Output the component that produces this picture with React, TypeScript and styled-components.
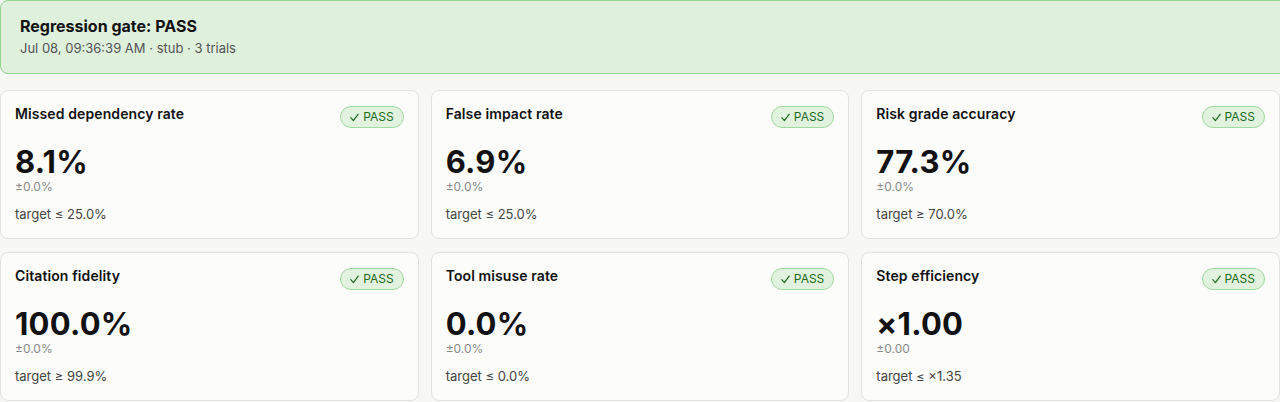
import React from "react";
import styled, { createGlobalStyle } from "styled-components";

const GlobalStyle = createGlobalStyle`
  html, body {
    margin: 0;
    padding: 0;
    background: #f7f7f5;
    overflow: hidden;
  }
  body {
    font-family: Inter, "Noto Sans", "Liberation Sans", sans-serif;
    color: #111;
    -webkit-font-smoothing: antialiased;
  }
`;

const Page = styled.div`
  width: 1280px;
  overflow: hidden;
  display: flex;
  flex-direction: column;
  gap: 16px;
`;

const Banner = styled.header`
  margin-right: -8px;
  background: #dff0dd;
  border: 1px solid #92d791;
  border-radius: 8px;
  padding: 15px 19px 16px;
  display: flex;
  flex-direction: column;
  gap: 3px;
`;

const BannerTitle = styled.h1`
  margin: 0;
  font-size: 16px;
  line-height: 20px;
  font-weight: 700;
  color: #111;
`;

const BannerMeta = styled.div`
  font-size: 13px;
  line-height: 18px;
  color: #555;
`;

const Grid = styled.div`
  display: grid;
  grid-template-columns: repeat(3, 1fr);
  gap: 13px 12px;
`;

const Card = styled.section`
  background: #fcfcfb;
  border: 1px solid #e2e2df;
  border-radius: 8px;
  padding: 15px 14px 15px;
  display: flex;
  flex-direction: column;
`;

const CardHead = styled.div`
  display: flex;
  justify-content: space-between;
  align-items: flex-start;
`;

const CardTitle = styled.h2`
  margin: 0;
  font-size: 14px;
  line-height: 16px;
  font-weight: 600;
  color: #111;
  letter-spacing: 0.1px;
`;

const Badge = styled.span<{ $ok: boolean }>`
  box-sizing: border-box;
  height: 22px;
  padding: 0 9px 0 9px;
  display: inline-flex;
  align-items: center;
  gap: 4px;
  border-radius: 11px;
  font-size: 12px;
  line-height: 1;
  background: ${(p) => (p.$ok ? "#e1f3df" : "#fbe3e1")};
  border: 1px solid ${(p) => (p.$ok ? "#9fdb9e" : "#e8a29c")};
  color: ${(p) => (p.$ok ? "#1f6a22" : "#9b2a22")};
`;

const CheckIcon = styled.svg`
  width: 9px;
  height: 9px;
  flex: none;
`;

const Value = styled.div`
  margin-top: 16px;
  font-size: 31px;
  line-height: 36px;
  font-weight: 700;
  color: #111;
  letter-spacing: 0.25px;
`;

const Spread = styled.div`
  margin-top: 0;
  font-size: 12px;
  line-height: 14px;
  color: #8a8a8a;
`;

const Target = styled.div`
  margin-top: 11px;
  font-size: 13px;
  line-height: 18px;
  color: #444;
`;

type Metric = {
  name: string;
  value: string;
  spread: string;
  target: string;
  ok: boolean;
};

const metrics: Metric[] = [
  { name: "Missed dependency rate", value: "8.1%", spread: "±0.0%", target: "target ≤ 25.0%", ok: true },
  { name: "False impact rate", value: "6.9%", spread: "±0.0%", target: "target ≤ 25.0%", ok: true },
  { name: "Risk grade accuracy", value: "77.3%", spread: "±0.0%", target: "target ≥ 70.0%", ok: true },
  { name: "Citation fidelity", value: "100.0%", spread: "±0.0%", target: "target ≥ 99.9%", ok: true },
  { name: "Tool misuse rate", value: "0.0%", spread: "±0.0%", target: "target ≤ 0.0%", ok: true },
  { name: "Step efficiency", value: "×1.00", spread: "±0.00", target: "target ≤ ×1.35", ok: true },
];

function Check() {
  return (
    <CheckIcon viewBox="0 0 9 9" aria-hidden="true">
      <path d="M0.8 4.6 L3.4 7.6 L8.2 1.2" fill="none" stroke="currentColor" strokeWidth="1.2" strokeLinecap="round" strokeLinejoin="round" />
    </CheckIcon>
  );
}

function MetricCard({ m }: { m: Metric }) {
  return (
    <Card>
      <CardHead>
        <CardTitle>{m.name}</CardTitle>
        <Badge $ok={m.ok}>
          {m.ok && <Check />}
          {m.ok ? "PASS" : "FAIL"}
        </Badge>
      </CardHead>
      <Value>{m.value}</Value>
      <Spread>{m.spread}</Spread>
      <Target>{m.target}</Target>
    </Card>
  );
}

export default function App() {
  return (
    <>
      <GlobalStyle />
      <Page>
        <Banner>
          <BannerTitle>Regression gate: PASS</BannerTitle>
          <BannerMeta>Jul 08, 09:36:39 AM · stub · 3 trials</BannerMeta>
        </Banner>
        <Grid>
          {metrics.map((m) => (
            <MetricCard key={m.name} m={m} />
          ))}
        </Grid>
      </Page>
    </>
  );
}
